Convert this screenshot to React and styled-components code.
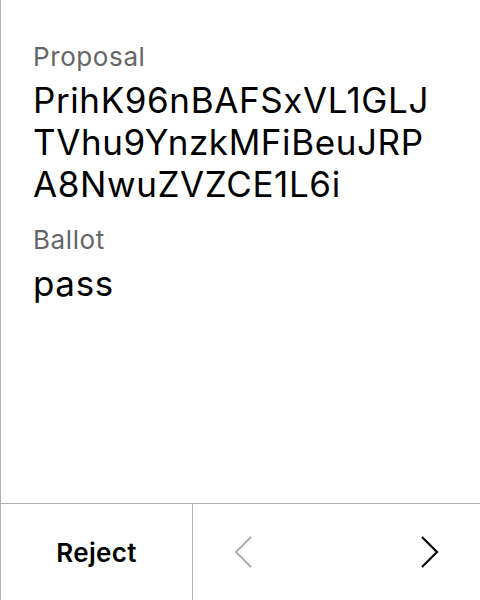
import React from "react";
import styled, { createGlobalStyle } from "styled-components";

const GlobalStyle = createGlobalStyle`
  html, body {
    margin: 0;
    padding: 0;
    background: #fff;
    font-family: Inter, "Noto Sans", sans-serif;
  }
`;

const Screen = styled.div`
  width: 480px;
  height: 600px;
  box-sizing: border-box;
  border-left: 1px solid #b0b0b0;
  display: flex;
  flex-direction: column;
  overflow: hidden;
`;

const Body = styled.div`
  flex: 1;
  padding: 40px 44px 0 32px;
`;

const Label = styled.div`
  font-size: 26px;
  line-height: 34px;
  letter-spacing: 0.6px;
  color: #666;
  margin-bottom: 5px;
`;

const Value = styled.div`
  font-size: 35px;
  line-height: 42px;
  letter-spacing: 0.6px;
  color: #000;
  word-break: break-all;
  margin-bottom: 18px;
`;

const Footer = styled.div`
  height: 96px;
  border-top: 1px solid #b0b0b0;
  display: flex;
`;

const RejectButton = styled.button`
  width: 192px;
  border: 0;
  border-right: 1px solid #b0b0b0;
  background: none;
  padding: 0;
  font-family: inherit;
  font-size: 26px;
  font-weight: 600;
  letter-spacing: 0.3px;
  color: #000;
`;

const Pager = styled.div`
  flex: 1;
  display: flex;
  justify-content: space-between;
  align-items: center;
  padding: 0 40px 0 40px;
`;

const Arrow = styled.button`
  border: 0;
  background: none;
  padding: 0;
  display: flex;
  color: ${(p) => (p.disabled ? "#b0b0b0" : "#000")};
`;

const Chevron = ({ dir }) => (
  <svg width="20" height="34" viewBox="0 0 20 34" fill="none">
    <path
      d={dir === "left" ? "M18 2 L3 17 L18 32" : "M2 2 L17 17 L2 32"}
      stroke="currentColor"
      strokeWidth="2.2"
    />
  </svg>
);

export default function App() {
  return (
    <>
      <GlobalStyle />
      <Screen>
        <Body>
          <Label>Proposal</Label>
          <Value>PrihK96nBAFSxVL1GLJTVhu9YnzkMFiBeuJRPA8NwuZVZCE1L6i</Value>
          <Label>Ballot</Label>
          <Value>pass</Value>
        </Body>
        <Footer>
          <RejectButton>Reject</RejectButton>
          <Pager>
            <Arrow disabled>
              <Chevron dir="left" />
            </Arrow>
            <Arrow>
              <Chevron dir="right" />
            </Arrow>
          </Pager>
        </Footer>
      </Screen>
    </>
  );
}
